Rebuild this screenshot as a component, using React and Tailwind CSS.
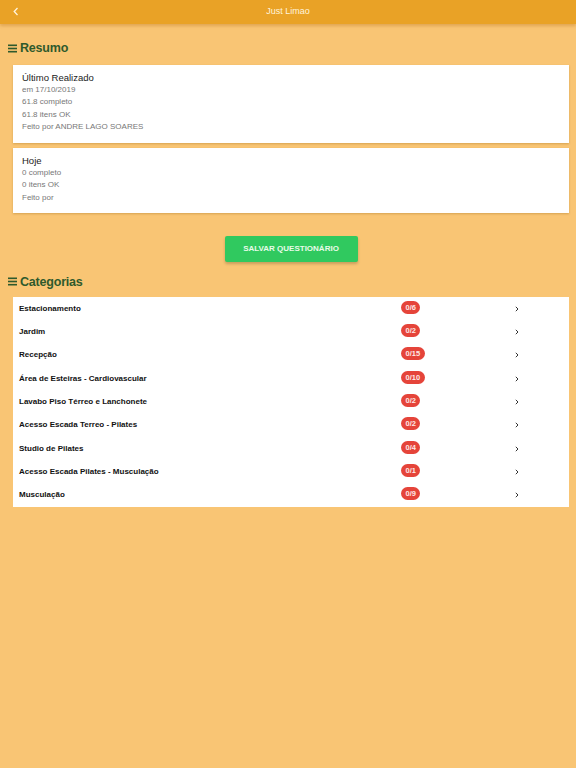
import React from "react";

const categorias = [
  { name: "Estacionamento", count: "0/6" },
  { name: "Jardim", count: "0/2" },
  { name: "Recepção", count: "0/15" },
  { name: "Área de Esteiras - Cardiovascular", count: "0/10" },
  { name: "Lavabo Piso Térreo e Lanchonete", count: "0/2" },
  { name: "Acesso Escada Terreo - Pilates", count: "0/2" },
  { name: "Studio de Pilates", count: "0/4" },
  { name: "Acesso Escada Pilates - Musculação", count: "0/1" },
  { name: "Musculação", count: "0/9" },
];

const SectionTitle = ({ children }) => (
  <h2 className="flex items-center gap-[3px] pl-[8px] text-[12.5px] font-semibold tracking-[-0.2px] text-[#2f5a2c] leading-none">
    <svg width="9" height="9" viewBox="0 0 9 9">
      <rect x="0" y="0.5" width="9" height="1.6" fill="#2f5a2c" />
      <rect x="0" y="3.7" width="9" height="1.6" fill="#2f5a2c" />
      <rect x="0" y="6.9" width="9" height="1.6" fill="#2f5a2c" />
    </svg>
    {children}
  </h2>
);

const App = () => {
  return (
    <div className="min-h-[768px] w-[576px] bg-[#f9c574] font-['Liberation_Sans',Arial,sans-serif]">
      <div className="relative flex h-[24px] items-center justify-center bg-[#e9a226] shadow-[0_2px_3px_rgba(180,110,20,0.35)]">
        <svg className="absolute left-[13px] top-[7px]" width="6" height="9" viewBox="0 0 6 9">
          <path d="M4.5 1 L1.2 4.5 L4.5 8" fill="none" stroke="#fff4dc" strokeWidth="1.3" />
        </svg>
        <span className="text-[9px] text-[#fff4dc]">Just Limao</span>
      </div>

      <div className="pt-[18px]">
        <SectionTitle>Resumo</SectionTitle>
      </div>

      <div className="ml-[13px] mr-[7px] mt-[10px] flex flex-col gap-[5px]">
        <div className="h-[78px] bg-white pl-[9px] pt-[6px] shadow-[0_1px_2px_rgba(150,100,20,0.35)]">
          <div className="text-[9.5px] text-[#222] leading-[13px]">Último Realizado</div>
          <div className="text-[8px] text-[#777] leading-[12.5px]">
            <div>em 17/10/2019</div>
            <div>61.8 completo</div>
            <div>61.8 itens OK</div>
            <div>Feito por ANDRE LAGO SOARES</div>
          </div>
        </div>
        <div className="h-[65px] bg-white pl-[9px] pt-[6px] shadow-[0_1px_2px_rgba(150,100,20,0.35)]">
          <div className="text-[9.5px] text-[#222] leading-[13px]">Hoje</div>
          <div className="text-[8px] text-[#777] leading-[12.5px]">
            <div>0 completo</div>
            <div>0 itens OK</div>
            <div>Feito por</div>
          </div>
        </div>
      </div>

      <div className="ml-[13px] mr-[7px] mt-[23px] flex justify-center">
        <button className="h-[26px] w-[133px] rounded-[2px] bg-[#30c95f] text-[8px] font-bold text-[#e9fbe9] shadow-[0_2px_3px_rgba(0,0,0,0.2)]">
          SALVAR QUESTIONÁRIO
        </button>
      </div>

      <div className="pt-[14px]">
        <SectionTitle>Categorias</SectionTitle>
      </div>

      <div className="ml-[13px] mr-[7px] mt-[9px] bg-white">
        {categorias.map((c) => (
          <div key={c.name} className="flex h-[23.35px] items-center pl-[6px]">
            <div className="w-[382px] text-[8px] font-bold text-[#111]">{c.name}</div>
            <div className="-mt-[3px] flex w-[114px] items-center">
              <span className="rounded-full bg-[#e5443a] px-[4.5px] text-[7.5px] font-bold leading-[13px] text-[#fde8e6]">
                {c.count}
              </span>
            </div>
            <svg width="4" height="6" viewBox="0 0 4 6">
              <path d="M0.8 0.8 L3 3 L0.8 5.2" fill="none" stroke="#333" strokeWidth="1" />
            </svg>
          </div>
        ))}
      </div>
    </div>
  );
};

export default App;
